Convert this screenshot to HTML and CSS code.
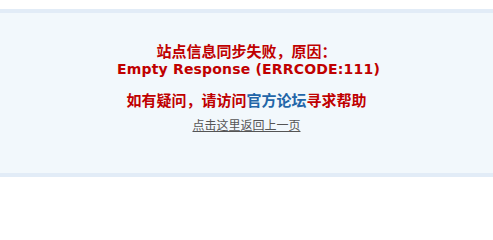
FILE: index.html
```html
<!DOCTYPE html>
<html lang="zh-CN">
<head>
<meta charset="utf-8">
<title>提示信息</title>
<link rel="stylesheet" href="styles.css">
</head>
<body>
<div class="page">
  <div class="alert">
    <div class="msg">
      <div class="cn">站点信息同步失败，原因：</div>
      <div class="en">Empty Response (ERRCODE:111)</div>
    </div>
    <p class="help">如有疑问，请访问<a class="forum" href="#">官方论坛</a>寻求帮助</p>
    <p class="back"><a href="#">点击这里返回上一页</a></p>
  </div>
</div>
</body>
</html>
```
FILE: styles.css
```css
html, body {
  margin: 0;
  padding: 0;
  background: #ffffff;
}
.page {
  padding-top: 9px;
}
.alert {
  box-sizing: border-box;
  height: 168px;
  background: #f2f8fc;
  border-top: 4px solid #e2ecf7;
  border-bottom: 4px solid #e2ecf7;
  padding-top: 28px;
  text-align: center;
}
.help, .back {
  margin: 0;
}
.msg {
  color: #c00000;
  font-weight: bold;
}
.cn {
  height: 19px;
  line-height: 19px;
  font-family: "Noto Sans CJK SC", sans-serif;
  font-size: 15px;
}
.en {
  height: 18px;
  line-height: 18px;
  padding-left: 4px;
  font-family: "DejaVu Sans", Verdana, sans-serif;
  font-size: 14px;
  letter-spacing: 0.18px;
}
.help {
  margin-top: 12px;
  height: 19px;
  line-height: 19px;
  font-family: "Noto Sans CJK SC", sans-serif;
  font-size: 15px;
  font-weight: bold;
  color: #c00000;
}
.forum {
  color: #2366a8;
  text-decoration: none;
}
.back {
  margin-top: 6px;
  height: 19px;
  line-height: 19px;
  font-family: "Noto Sans CJK SC", sans-serif;
  font-size: 12px;
}
.back a {
  color: #555555;
  text-decoration: underline;
}
```
